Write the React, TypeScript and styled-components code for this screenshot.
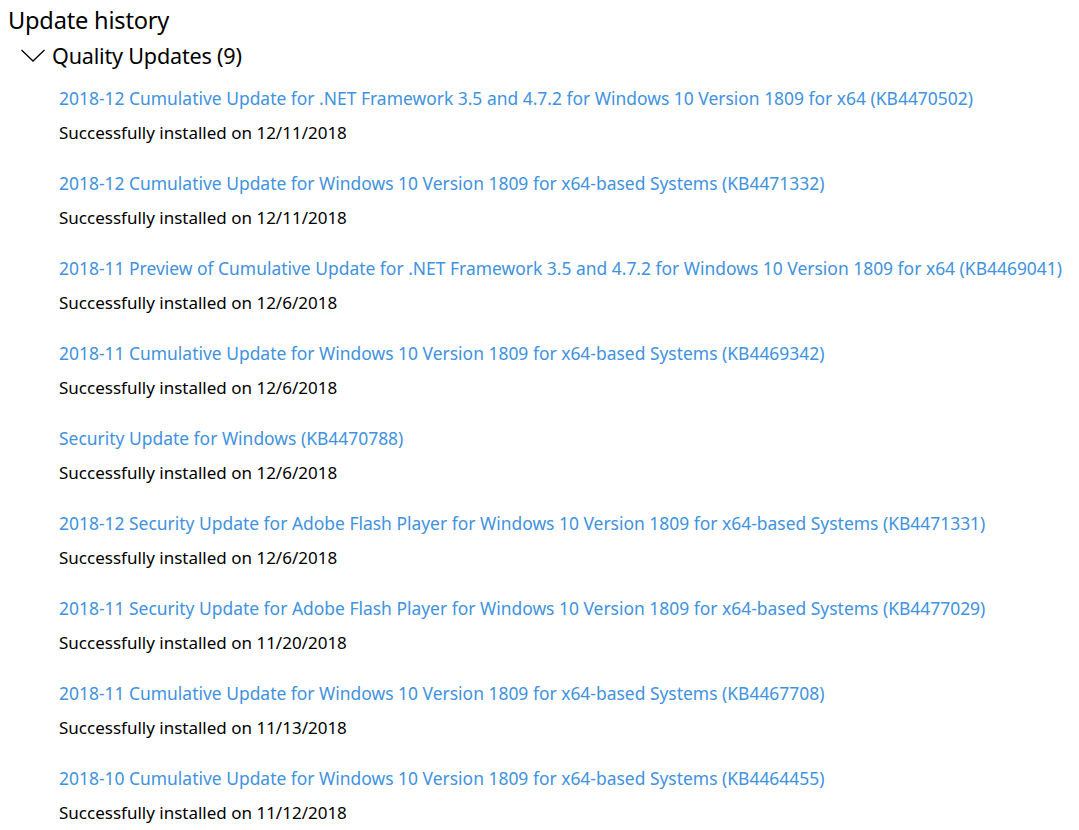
import React from "react";
import styled, { createGlobalStyle } from "styled-components";

const Global = createGlobalStyle`
  html, body { margin: 0; padding: 0; background: #ffffff; }
  body { font-family: "Noto Sans", "Open Sans", sans-serif; color: #000; }
`;

const Page = styled.div`
  width: 1079px;
  height: 830px;
  overflow: hidden;
  padding: 0 0 0 8px;
  box-sizing: border-box;
`;

const Title = styled.h1`
  margin: 0;
  padding-top: 4px;
  font-size: 23.6px;
  font-weight: 400;
  line-height: 32px;
  letter-spacing: -0.2px;
`;

const GroupHeader = styled.div`
  display: flex;
  align-items: center;
  gap: 6px;
  margin-left: 12px;
  height: 38px;
  font-size: 21.6px;
  letter-spacing: -0.2px;
`;

const List = styled.div`
  display: flex;
  flex-direction: column;
  padding-left: 51px;
  padding-top: 12px;
`;

const Item = styled.div`
  display: flex;
  flex-direction: column;
  height: 85px;
`;

const Link = styled.a`
  color: #4192e0;
  font-size: 17.45px;
  line-height: 24px;
  text-decoration: none;
  white-space: nowrap;
  cursor: pointer;
`;

const Status = styled.div`
  margin-top: 11px;
  font-size: 17px;
  line-height: 24px;
  white-space: nowrap;
`;

const updates: [string, string][] = [
  ["2018-12 Cumulative Update for .NET Framework 3.5 and 4.7.2 for Windows 10 Version 1809 for x64 (KB4470502)", "12/11/2018"],
  ["2018-12 Cumulative Update for Windows 10 Version 1809 for x64-based Systems (KB4471332)", "12/11/2018"],
  ["2018-11 Preview of Cumulative Update for .NET Framework 3.5 and 4.7.2 for Windows 10 Version 1809 for x64 (KB4469041)", "12/6/2018"],
  ["2018-11 Cumulative Update for Windows 10 Version 1809 for x64-based Systems (KB4469342)", "12/6/2018"],
  ["Security Update for Windows (KB4470788)", "12/6/2018"],
  ["2018-12 Security Update for Adobe Flash Player for Windows 10 Version 1809 for x64-based Systems (KB4471331)", "12/6/2018"],
  ["2018-11 Security Update for Adobe Flash Player for Windows 10 Version 1809 for x64-based Systems (KB4477029)", "11/20/2018"],
  ["2018-11 Cumulative Update for Windows 10 Version 1809 for x64-based Systems (KB4467708)", "11/13/2018"],
  ["2018-10 Cumulative Update for Windows 10 Version 1809 for x64-based Systems (KB4464455)", "11/12/2018"],
];

const Chevron = () => (
  <svg width="26" height="16" viewBox="0 0 26 16">
    <path d="M1.5 3 L13 14 L24.5 3" fill="none" stroke="#000" strokeWidth="1.3" />
  </svg>
);

export default function App() {
  return (
    <Page>
      <Global />
      <Title>Update history</Title>
      <GroupHeader>
        <Chevron />
        <span>Quality Updates (9)</span>
      </GroupHeader>
      <List>
        {updates.map(([name, date]) => (
          <Item key={name}>
            <Link>{name}</Link>
            <Status>Successfully installed on {date}</Status>
          </Item>
        ))}
      </List>
    </Page>
  );
}
